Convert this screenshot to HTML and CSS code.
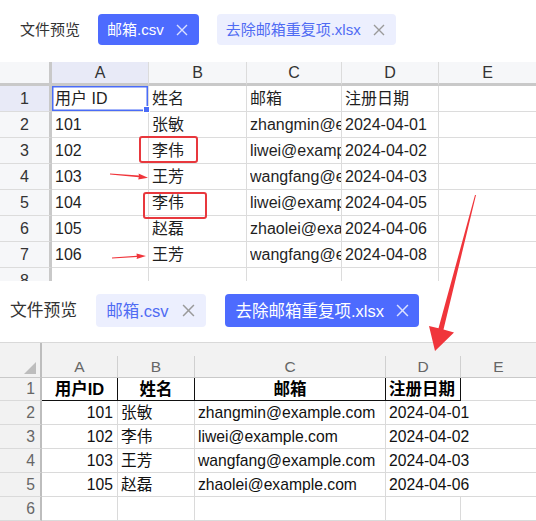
FILE: index.html
```html
<!DOCTYPE html>
<html lang="zh">
<head>
<meta charset="utf-8">
<title>文件预览</title>
<link rel="stylesheet" href="styles.css">
</head>
<body>
<div class="page">
  <section class="shot1">
    <div class="tabs tabs1">
      <span class="label">文件预览</span>
      <span class="tab on">邮箱.csv<svg class="x" viewBox="0 0 12 12"><path d="M1 1L11 11M11 1L1 11"/></svg></span>
      <span class="tab off">去除邮箱重复项.xlsx<svg class="x" viewBox="0 0 12 12"><path d="M1 1L11 11M11 1L1 11"/></svg></span>
    </div>
    <div class="sheet1">
      <div class="row head"><div class="c rh"></div><div class="c hl">A</div><div class="c">B</div><div class="c">C</div><div class="c">D</div><div class="c">E</div></div>
      <div class="row"><div class="c rh hl">1</div><div class="c sel"><span>用户 ID</span></div><div class="c">姓名</div><div class="c">邮箱</div><div class="c">注册日期</div><div class="c"></div></div>
      <div class="row"><div class="c rh">2</div><div class="c">101</div><div class="c">张敏</div><div class="c"><span class="clip">zhangmin@example.com</span></div><div class="c">2024-04-01</div><div class="c"></div></div>
      <div class="row"><div class="c rh">3</div><div class="c">102</div><div class="c">李伟</div><div class="c"><span class="clip">liwei@example.com</span></div><div class="c">2024-04-02</div><div class="c"></div></div>
      <div class="row"><div class="c rh">4</div><div class="c">103</div><div class="c">王芳</div><div class="c"><span class="clip">wangfang@example.com</span></div><div class="c">2024-04-03</div><div class="c"></div></div>
      <div class="row"><div class="c rh">5</div><div class="c">104</div><div class="c">李伟</div><div class="c"><span class="clip">liwei@example.com</span></div><div class="c">2024-04-05</div><div class="c"></div></div>
      <div class="row"><div class="c rh">6</div><div class="c">105</div><div class="c">赵磊</div><div class="c"><span class="clip">zhaolei@example.com</span></div><div class="c">2024-04-06</div><div class="c"></div></div>
      <div class="row"><div class="c rh">7</div><div class="c">106</div><div class="c">王芳</div><div class="c"><span class="clip">wangfang@example.com</span></div><div class="c">2024-04-08</div><div class="c"></div></div>
      <div class="row"><div class="c rh">8</div><div class="c"></div><div class="c"></div><div class="c"></div><div class="c"></div><div class="c"></div></div>
    </div>
  </section>

  <section class="shot2">
    <div class="tabs tabs2">
      <span class="label">文件预览</span>
      <span class="tab off">邮箱.csv<svg class="x" viewBox="0 0 12 12"><path d="M1 1L11 11M11 1L1 11"/></svg></span>
      <span class="tab on">去除邮箱重复项.xlsx<svg class="x" viewBox="0 0 12 12"><path d="M1 1L11 11M11 1L1 11"/></svg></span>
    </div>
    <div class="sheet2">
      <div class="row head"><div class="c corner"><i class="tri"></i></div><div class="c"><b class="lt">A</b></div><div class="c"><b class="lt">B</b></div><div class="c"><b class="lt">C</b></div><div class="c"><b class="lt">D</b></div><div class="c"><b class="lt last">E</b></div></div>
      <div class="row r1"><div class="c rh">1</div><div class="c bk ctr">用户ID</div><div class="c bk ctr">姓名</div><div class="c bk ctr">邮箱</div><div class="c bk">注册日期</div><div class="c"></div></div>
      <div class="row"><div class="c rh">2</div><div class="c num">101</div><div class="c">张敏</div><div class="c">zhangmin@example.com</div><div class="c spill">2024-04-01</div><div class="c"></div></div>
      <div class="row"><div class="c rh">3</div><div class="c num">102</div><div class="c">李伟</div><div class="c">liwei@example.com</div><div class="c spill">2024-04-02</div><div class="c"></div></div>
      <div class="row"><div class="c rh">4</div><div class="c num">103</div><div class="c">王芳</div><div class="c">wangfang@example.com</div><div class="c spill">2024-04-03</div><div class="c"></div></div>
      <div class="row"><div class="c rh">5</div><div class="c num">105</div><div class="c">赵磊</div><div class="c">zhaolei@example.com</div><div class="c spill">2024-04-06</div><div class="c"></div></div>
      <div class="row"><div class="c rh">6</div><div class="c"></div><div class="c"></div><div class="c"></div><div class="c"></div><div class="c"></div></div>
    </div>
  </section>

  <div class="mark m1"></div>
  <div class="mark m2"></div>
  <svg class="arrows" viewBox="0 0 536 521" width="536" height="521">
    <polygon points="110,173.4 139,175.6 138.5,173.4 148,177.8 138.2,179.6 138.8,177.2 110,174.6"/>
    <polygon points="112,258.6 137,256.9 136.6,259 146,256 136.5,253.6 136.8,255.8 112,257.6"/>
    <polygon points="476,195 443.5,329.5 454,332.5 435,351 429,326 438.5,328.2 475,195"/>
  </svg>
</div>
</body>
</html>
```

FILE: styles.css
```css
* { box-sizing: border-box; }
body {
  margin: 0;
  background: #fff;
  color: #222;
  font-family: "Liberation Sans", "Noto Sans CJK SC", sans-serif;
}
.page {
  position: relative;
  width: 536px;
  height: 521px;
  overflow: hidden;
}

/* ---------- tabs ---------- */
.tabs { display: flex; align-items: flex-start; }
.label { color: #333; }
.tab {
  display: flex;
  align-items: center;
  border-radius: 4px;
  white-space: nowrap;
  line-height: 18px;
}
.tab.on { background: #4d6bfe; color: #fff; }
.tab.off { background: #eceffe; color: #4f6bf3; }
.x { width: 12px; height: 12px; fill: none; stroke-width: 1.4; }
.tab.on .x { stroke: rgba(255,255,255,0.8); }
.tab.off .x { stroke: #9a9a9a; }

.tabs1 { height: 62px; padding: 14px 0 0 20px; gap: 18px; font-size: 15px; }
.tabs1 .label { line-height: 31px; }
.tabs1 .tab { height: 31px; padding: 0 11px 0 9px; gap: 12px; }

.tabs2 { height: 61px; padding: 13px 0 0 10px; gap: 19px; font-size: 16.5px; }
.tabs2 .label { line-height: 33px; font-size: 16.8px; }
.tabs2 .tab { height: 33px; padding: 0 11px 0 10px; gap: 14px; }
.tabs2 .tab.on { gap: 12px; padding-right: 10px; }
.tabs2 .x { width: 13px; height: 13px; }

/* ---------- sheet 1 (web grid) ---------- */
.shot1 { height: 281px; overflow: hidden; }
.sheet1 .row {
  display: grid;
  grid-template-columns: 52px 97px 98px 95px 97px 97px;
  height: 26px;
}
.sheet1 .c {
  position: relative;
  display: flex;
  align-items: center;
  padding: 1px 0 0 3px;
  border-right: 1px solid #dcdcdc;
  border-bottom: 1px solid #dcdcdc;
  font-size: 16px;
  line-height: 18px;
  color: #1f1f1f;
  white-space: nowrap;
  overflow: hidden;
}
.sheet1 .clip { display: block; width: 100%; overflow: hidden; }
.sheet1 .c:last-child { border-right: none; }
.sheet1 .head { height: 24px; }
.sheet1 .head .c {
  justify-content: center;
  padding: 0;
  background: #f6f7f9;
  border-bottom: 3px solid #c9c9c9;
  color: #333;
}
.sheet1 .rh {
  justify-content: center;
  padding: 1px 0 0 0;
  background: #f6f7f9;
  border-right: 3px solid #c9c9c9;
  color: #333;
}
.sheet1 .hl, .sheet1 .head .hl { background: #e8eaf7; }
.sheet1 .sel {
  overflow: visible;
  box-shadow: inset 0 0 0 1.5px #4a6cf7;
  z-index: 2;
}
.sheet1 .sel::after {
  content: "";
  position: absolute;
  right: -2px;
  bottom: -2px;
  width: 5px;
  height: 5px;
  background: #4a6cf7;
  border: 1px solid #fff;
}

/* ---------- sheet 2 (excel) ---------- */
.sheet2 .row {
  display: grid;
  grid-template-columns: 42px 76px 77px 191px 75px 75px;
  height: 24px;
}
.sheet2 .c {
  display: flex;
  align-items: center;
  padding-left: 3px;
  border-right: 1px solid #dadada;
  border-bottom: 1px solid #dadada;
  font-size: 15.7px;
  line-height: 18px;
  color: #111;
  white-space: nowrap;
}
.sheet2 .c:last-child { border-right: none; }
.sheet2 .spill { border-right: none; overflow: visible; }
.sheet2 .head {
  height: 36px;
  background: #f2f2f2;
  border-top: 1px solid #d9d9d9;
}
.sheet2 .head .c {
  align-items: flex-end;
  padding: 0;
  border-right: none;
  border-bottom: 1px solid #c9c9c9;
  position: relative;
}
.sheet2 .lt {
  flex: 1;
  height: 21px;
  display: flex;
  align-items: center;
  justify-content: center;
  border-right: 1px solid #d0d0d0;
  font-weight: normal;
  color: #666;
  font-size: 15.5px;
}
.sheet2 .lt.last { border-right: none; }
.sheet2 .corner, .sheet2 .rh {
  border-right: 2px solid #bdbdbd !important;
  background: #f2f2f2;
}
.sheet2 .rh {
  justify-content: flex-end;
  padding: 0 5px 0 0;
  color: #666;
}
.tri {
  position: absolute;
  right: 4px;
  bottom: 3px;
  width: 0;
  height: 0;
  border-left: 12px solid transparent;
  border-bottom: 12px solid #bdbdbd;
}
.sheet2 .r1 { height: 23px; }
.sheet2 .r1 .c { border-bottom: 1.5px solid #111; }
.sheet2 .r1 .rh { border-bottom: 1px solid #dadada; }
.sheet2 .r1 .c:last-child { border-bottom: 1px solid #dadada; }
.sheet2 .bk {
  border-right: 1.5px solid #111;
  font-weight: bold;
  font-size: 16.5px;
  color: #000;
}
.sheet2 .ctr { justify-content: center; padding-left: 0; }
.sheet2 .num { justify-content: flex-end; padding: 0 4px 0 0; }

/* ---------- annotations ---------- */
.mark {
  position: absolute;
  border: 2px solid #e8383d;
  border-radius: 3px;
}
.m1 { left: 139px; top: 136px; width: 59px; height: 27px; }
.m2 { left: 143px; top: 192px; width: 64px; height: 27px; }
.arrows {
  position: absolute;
  left: 0;
  top: 0;
  fill: #f0353b;
  pointer-events: none;
}
```
